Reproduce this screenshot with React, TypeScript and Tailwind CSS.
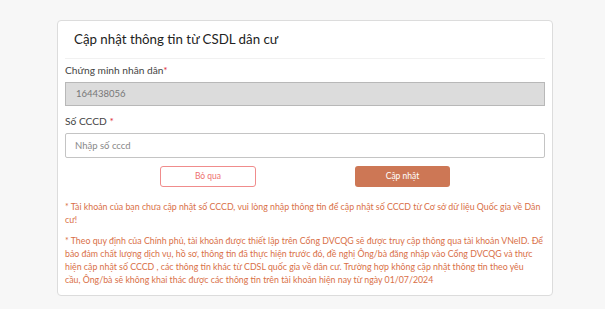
import React from 'react';

export default function App() {
  return (
    <div className="min-h-[309px] w-[605px] bg-[#f7f7f7] pt-5 font-['Lato',sans-serif]">
      <div className="ml-[57px] w-[496px] rounded-[4px] border border-[#dcdcdc] bg-white px-[7px] pb-[9px]">
        <div className="border-b border-[#f1f1f1] px-[9px] pb-[9px] pt-[8px]">
          <h1 className="text-[13.3px] leading-[20px] text-[#222]">Cập nhật thông tin từ CSDL dân cư</h1>
        </div>

        <div className="mt-[4px]">
          <label className="block text-[10.2px] leading-[14px] text-[#444]">
            Chứng minh nhân dân<span className="text-[#e0303a]">*</span>
          </label>
          <div className="mt-[5px] flex h-[24px] items-center border border-[#b8b8b8] bg-[#dcdcdc] px-[10px] text-[9.5px] text-[#777]">
            164438056
          </div>
        </div>

        <div className="mt-[8px]">
          <label className="block text-[10.2px] leading-[14px] text-[#444]">
            Số CCCD <span className="text-[#e0303a]">*</span>
          </label>
          <input
            className="mt-[5px] block h-[25px] w-full rounded-[2px] border border-[#c4c4c4] px-[9px] text-[9.5px] text-[#555] outline-none placeholder:text-[#888]"
            placeholder="Nhập số cccd"
          />
        </div>

        <div className="mt-[8px] flex justify-center gap-[99px]">
          <button className="h-[21px] w-[96px] rounded-[3px] border border-[#f08c8c] text-[8.5px] text-[#ee6f6f]">Bỏ qua</button>
          <button className="h-[21px] w-[95px] rounded-[3px] bg-[#cd7755] text-[8.5px] text-white">Cập nhật</button>
        </div>

        <div className="mt-[13px] text-[8.8px] leading-[13px] text-[#d96f47]">
          <p>* Tài khoản của bạn chưa cập nhật số CCCD, vui lòng nhập thông tin để cập nhật số CCCD từ Cơ sở dữ liệu Quốc gia về Dân cư!</p>
          <p className="mt-[8px]">
            * Theo quy định của Chính phủ, tài khoản được thiết lập trên Cổng DVCQG sẽ được truy cập thông qua tài khoản VNeID. Để bảo đảm chất lượng dịch vụ, hồ sơ, thông tin đã thực hiện trước đó, đề nghị Ông/bà đăng nhập vào Cổng DVCQG và thực hiện cập nhật số CCCD , các thông tin khác từ CDSL quốc gia về dân cư. Trường hợp không cập nhật thông tin theo yêu cầu,&nbsp;Ông/bà sẽ không khai thác được các thông tin trên tài khoản hiện nay từ ngày 01/07/2024
          </p>
        </div>
      </div>
    </div>
  );
}
